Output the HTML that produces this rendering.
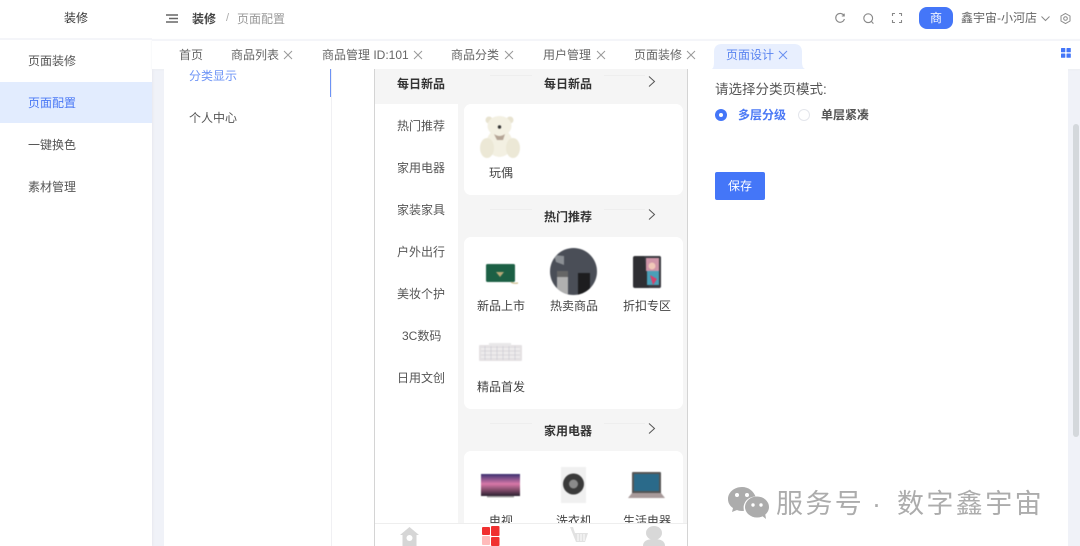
<!DOCTYPE html>
<html lang="zh"><head><meta charset="utf-8">
<style>
*{box-sizing:border-box;margin:0;padding:0}
html{width:1080px;height:546px;overflow:hidden;background:#f0f2f8}
body{position:relative;width:1080px;height:546px;overflow:hidden;background:#f0f2f8;font-family:"Liberation Sans","Noto Sans CJK SC",sans-serif;font-size:12px;color:#555;filter:blur(.3px)}
.a{position:absolute}
.t{position:absolute;white-space:nowrap;line-height:16px}
svg{display:block;overflow:visible}
.cat{left:397px;color:#555;font-size:12px}
.sec{left:544px;font-weight:700;color:#333;font-size:12px}
.lab{color:#444;font-size:12px}
.ln{position:absolute;height:1px;background:#eeeeee}
.chev{position:absolute;left:648px;width:8px;height:11px}
.tab{top:47px;color:#666}
.im{filter:blur(.4px)}
</style></head><body>
<!-- sidebar -->
<div class="a" style="left:0;top:0;width:152px;height:546px;background:#fff;box-shadow:1px 0 2px #e8e8ee"></div>
<div class="a" style="left:0;top:38px;width:152px;height:2px;background:#f4f5f9"></div>
<div class="t" style="left:64px;top:10px;color:#333">装修</div>
<div class="t" style="left:28px;top:53px">页面装修</div>
<div class="a" style="left:0;top:82px;width:152px;height:41px;background:#e2ecfe"></div>
<div class="t" style="left:28px;top:95px;color:#4a78f5">页面配置</div>
<div class="t" style="left:28px;top:137px">一键换色</div>
<div class="t" style="left:28px;top:179px">素材管理</div>
<!-- header -->
<div class="a" style="left:152px;top:0;width:928px;height:39px;background:#fff"></div>
<div class="a" style="left:152px;top:39px;width:928px;height:30px;background:#fff;box-shadow:0 1px 2px #eceef2;border-top:2px solid #f4f5f9"></div>
<svg class="a" style="left:166px;top:14px" width="12" height="10" fill="none" stroke="#666" stroke-width="1.400"><path d="M0 1H12M3 4.500H12M0 8H12"/></svg>
<div class="t" style="left:192px;top:11px;font-weight:700;color:#444">装修</div>
<div class="t" style="left:226px;top:10px;color:#aaa;font-size:11px">/</div>
<div class="t" style="left:237px;top:11px;color:#999">页面配置</div>
<svg class="a" style="left:835px;top:13px" width="10" height="11" fill="none" stroke="#888" stroke-width="1.100"><path d="M8.800 2.400A4.400 4.400 0 1 0 9.400 6M9.200 .6V3H6.800"/></svg>
<svg class="a" style="left:863px;top:13px" width="12" height="12" fill="none" stroke="#888" stroke-width="1.100"><circle cx="5.200" cy="5.200" r="4.400"/><path d="M8.400 8.400L10.400 10.600"/></svg>
<svg class="a" style="left:892px;top:13px" width="10" height="10" fill="none" stroke="#888" stroke-width="1.100"><path d="M.5 3V.5H3M7 .5H9.500V3M9.500 7V9.500H7M3 9.500H.5V7"/></svg>
<div class="a" style="left:919px;top:7px;width:34px;height:22px;background:#4476f8;border-radius:8px;color:#fff;text-align:center;line-height:22px;font-size:12px">商</div>
<div class="t" style="left:961px;top:10px;color:#666;font-size:12px">鑫宇宙-小河店</div>
<svg class="a" style="left:1041px;top:16px" width="9" height="6" fill="none" stroke="#888"><path d="M.5 .5L4.500 4.500L8.500 .5"/></svg>
<svg class="a" style="left:1060px;top:13px" width="11" height="11" fill="none" stroke="#888"><path d="M5.500 .5L10 3V8L5.500 10.500L1 8V3Z"/><circle cx="5.500" cy="5.500" r="1.800"/></svg>
<!-- tabs -->
<div class="t tab" style="left:179px">首页</div>
<div class="t tab" style="left:231px">商品列表</div>
<div class="t tab" style="left:322px">商品管理 ID:101</div>
<div class="t tab" style="left:451px">商品分类</div>
<div class="t tab" style="left:543px">用户管理</div>
<div class="t tab" style="left:634px">页面装修</div>
<svg class="a" style="left:709px;top:44px" width="98" height="25" fill="#e8effe"><path d="M3 25Q5 24 5 18V8Q5 0 13 0H85Q93 0 93 8V18Q93 24 96 25Z"/></svg>
<div class="t tab" style="left:726px;color:#5a84f0">页面设计</div>
<svg class="a" style="left:284px;top:51px" width="8" height="8" stroke="#999"><path d="M0 0L8 8M8 0L0 8"/></svg>
<svg class="a" style="left:414px;top:51px" width="8" height="8" stroke="#999"><path d="M0 0L8 8M8 0L0 8"/></svg>
<svg class="a" style="left:505px;top:51px" width="8" height="8" stroke="#999"><path d="M0 0L8 8M8 0L0 8"/></svg>
<svg class="a" style="left:597px;top:51px" width="8" height="8" stroke="#999"><path d="M0 0L8 8M8 0L0 8"/></svg>
<svg class="a" style="left:687px;top:51px" width="8" height="8" stroke="#999"><path d="M0 0L8 8M8 0L0 8"/></svg>
<svg class="a" style="left:779px;top:51px" width="8" height="8" stroke="#6a90f0"><path d="M0 0L8 8M8 0L0 8"/></svg>
<svg class="a" style="left:1061px;top:48px" width="10" height="10" fill="#4476f8"><rect width="4.300" height="4.300" rx=".6"/><rect x="5.500" width="4.300" height="4.300" rx=".6"/><rect y="5.500" width="4.300" height="4.300" rx=".6"/><rect x="5.500" y="5.500" width="4.300" height="4.300" rx=".6"/></svg>
<!-- main -->
<div class="a" style="left:164px;top:69px;width:904px;height:477px;background:#fff"></div>
<div class="a" style="left:331px;top:69px;width:1px;height:477px;background:#f0f0f3"></div>
<div class="a" style="left:330px;top:69px;width:1px;height:28px;background:#6d93f5"></div>
<div class="t" style="left:189px;top:68px;color:#6f95f6">分类显示</div>
<div class="t" style="left:189px;top:110px;color:#555">个人中心</div>
<div class="a" style="left:1073px;top:124px;width:6px;height:313px;background:#d4d8dc;border-radius:3px"></div>
<!-- phone -->
<div class="a" style="left:374px;top:69px;width:314px;height:477px;background:#f5f5f5;border-left:1px solid #d4d4d4;border-right:1px solid #d4d4d4"></div>
<div class="a" style="left:375px;top:104px;width:83px;height:419px;background:#fff"></div>
<div class="t" style="left:397px;top:76px;font-weight:700;color:#333">每日新品</div>
<div class="t cat" style="top:118px">热门推荐</div>
<div class="t cat" style="top:160px">家用电器</div>
<div class="t cat" style="top:202px">家装家具</div>
<div class="t cat" style="top:244px">户外出行</div>
<div class="t cat" style="top:286px">美妆个护</div>
<div class="t cat" style="top:328px;left:402px">3C数码</div>
<div class="t cat" style="top:370px">日用文创</div>
<div class="t sec" style="top:76px">每日新品</div>
<div class="t sec" style="top:209px">热门推荐</div>
<div class="t sec" style="top:423px">家用电器</div>
<div class="ln" style="left:490px;top:75px;width:42px"></div><div class="ln" style="left:604px;top:75px;width:41px"></div>
<div class="ln" style="left:490px;top:209px;width:42px"></div><div class="ln" style="left:604px;top:209px;width:41px"></div>
<div class="ln" style="left:490px;top:423px;width:42px"></div><div class="ln" style="left:604px;top:423px;width:41px"></div>
<svg class="chev" style="top:76px" fill="none" stroke="#555"><path d="M1 .5L6.500 5.500L1 10.500"/></svg>
<svg class="chev" style="top:209px" fill="none" stroke="#555"><path d="M1 .5L6.500 5.500L1 10.500"/></svg>
<svg class="chev" style="top:423px" fill="none" stroke="#555"><path d="M1 .5L6.500 5.500L1 10.500"/></svg>
<div class="a" style="left:464px;top:104px;width:219px;height:91px;background:#fff;border-radius:7px"></div>
<div class="a" style="left:464px;top:237px;width:219px;height:172px;background:#fff;border-radius:7px"></div>
<div class="a" style="left:464px;top:451px;width:219px;height:95px;background:#fff;border-radius:7px"></div>
<!-- bear -->
<svg class="a im" style="left:480px;top:115px" width="42" height="46"><circle cx="9" cy="5" r="3.500" fill="#e8e3d0"/><circle cx="30" cy="5" r="3.500" fill="#e8e3d0"/><ellipse cx="19.500" cy="11" rx="12" ry="10" fill="#f3f0e2"/><ellipse cx="19.500" cy="28" rx="13" ry="14" fill="#f3f0e2"/><ellipse cx="7" cy="33" rx="7" ry="10" fill="#ece8d6"/><ellipse cx="33" cy="33" rx="7" ry="10" fill="#ece8d6"/><path d="M14 19Q19.500 23 25 19L23 25H17Z" fill="#b5a596"/><circle cx="19.500" cy="12" r="1.700" fill="#333"/></svg>
<div class="t lab" style="left:489px;top:165px">玩偶</div>
<!-- bag -->
<svg class="a im" style="left:485px;top:263px" width="34" height="26"><rect x="1" y="1" width="29" height="18" rx="1.500" fill="#1c6045"/><path d="M11 9L15 14L19 9Z" fill="#b7a878"/><path d="M26 19Q28 21 33 20" fill="none" stroke="#cdbb8a" stroke-width="1.200"/></svg>
<!-- bottles circle -->
<svg class="a im" style="left:550px;top:248px" width="47" height="47"><clipPath id="c"><circle cx="23.500" cy="23.500" r="23.500"/></clipPath><g clip-path="url(#c)"><rect width="47" height="47" fill="#4a4e57"/><rect x="7" y="25" width="11" height="22" fill="#b0b0b0"/><rect x="7" y="23" width="11" height="6" fill="#666"/><rect x="28" y="25" width="12" height="22" fill="#1d1d1f"/><path d="M4 7L14 8L14 17L6 14Z" fill="#8b8f94"/></g></svg>
<!-- phone -->
<svg class="a im" style="left:632px;top:255px" width="30" height="34"><rect x="1" y="1" width="28" height="32" rx="2" fill="#2f2f33"/><path d="M12 1H27Q29 1 29 3V31Q29 33 27 33H17Z" fill="#3a3a40"/><rect x="14" y="3" width="13" height="13" fill="#cf95a8"/><rect x="15" y="16" width="12" height="14" fill="#4aa0b8"/><circle cx="20" cy="11" r="3.500" fill="#f0c8b8"/><path d="M18 20L25 24L21 30Z" fill="#d8406a"/></svg>
<!-- keyboard -->
<svg class="a im" style="left:479px;top:342px" width="44" height="20"><rect width="43" height="16" y="3" rx="1" fill="#e4e1e3"/><rect x="10" y="1" width="22" height="3" fill="#e9e8e9"/><path d="M2 7H41M2 11H41M2 15H41" stroke="#f5f4f5"/><path d="M6 4V18M12 4V18M18 4V18M24 4V18M30 4V18M36 4V18" stroke="#cfcfd5" stroke-width=".8"/></svg>
<div class="t lab" style="left:477px;top:298px">新品上市</div>
<div class="t lab" style="left:550px;top:298px">热卖商品</div>
<div class="t lab" style="left:623px;top:298px">折扣专区</div>
<div class="t lab" style="left:477px;top:379px">精品首发</div>
<!-- tv etc -->
<svg class="a im" style="left:481px;top:473px" width="40" height="26"><defs><linearGradient id="g" x1="0" y1="0" x2="0" y2="1"><stop offset="0" stop-color="#3a3070"/><stop offset=".45" stop-color="#d878a8"/><stop offset=".7" stop-color="#8a5070"/><stop offset="1" stop-color="#2a2030"/></linearGradient></defs><rect width="39" height="22" y="1" fill="url(#g)"/><rect x="6" y="23" width="27" height="1.500" fill="#aaa"/></svg>
<svg class="a im" style="left:560px;top:467px" width="28" height="37"><rect x="1" y="0" width="25" height="36" fill="#f0f0f0"/><circle cx="13.500" cy="17" r="10.500" fill="#3a3a3a"/><circle cx="13.500" cy="17" r="4.500" fill="#8a8a8a"/></svg>
<svg class="a im" style="left:628px;top:471px" width="38" height="28"><rect x="4" y="1" width="29" height="22" rx="1" fill="#555"/><rect x="6" y="3" width="25" height="17" fill="#2a6a8a"/><path d="M0 27L4 22H33L37 27Z" fill="#a89a9a"/></svg>
<div class="t lab" style="left:489px;top:513px">电视</div>
<div class="t lab" style="left:556px;top:513px">洗衣机</div>
<div class="t lab" style="left:623px;top:513px">生活电器</div>
<!-- tabbar -->
<div class="a" style="left:375px;top:523px;width:312px;height:23px;background:#fff;border-top:1px solid #eee"></div>
<svg class="a" style="left:400px;top:527px" width="19" height="19" fill="#d6d6d6"><path d="M9.500 0L19 8H16.500V19H2.500V8H0Z"/><circle cx="9.500" cy="11" r="3" fill="#fff"/></svg>
<svg class="a" style="left:482px;top:526px" width="18" height="20"><rect width="8" height="8" y="1" fill="#f03030" rx="1"/><rect x="9" width="8.500" height="10" fill="#f03030" rx="1"/><rect y="10" width="8" height="9" fill="#fbb" rx="1"/><rect x="9" y="11" width="8.500" height="9" fill="#f03030" rx="1"/></svg>
<svg class="a" style="left:570px;top:527px" width="19" height="19" fill="#e2e2e2"><path d="M0 0H3L5 6H18L15 15H6Z"/><path d="M8 7V14M11 7V14M14 7V14" stroke="#fff"/></svg>
<svg class="a" style="left:643px;top:526px" width="22" height="20" fill="#d8d8d8"><ellipse cx="11" cy="7" rx="8" ry="7"/><path d="M0 20Q0 13 11 13Q22 13 22 20Z"/></svg>
<!-- right form -->
<div class="t" style="left:715px;top:82px;font-size:13.500px;color:#555">请选择分类页模式:</div>
<div class="a" style="left:715px;top:109px;width:12px;height:12px;border-radius:50%;background:#4476f8"></div>
<div class="a" style="left:719px;top:113px;width:4px;height:4px;border-radius:50%;background:#fff"></div>
<div class="t" style="left:738px;top:107px;color:#4a78f5;font-size:12px;font-weight:700">多层分级</div>
<div class="a" style="left:798px;top:109px;width:12px;height:12px;border-radius:50%;border:1px solid #e4e6ec"></div>
<div class="t" style="left:821px;top:107px;color:#555;font-size:12px;font-weight:700">单层紧凑</div>
<div class="a" style="left:715px;top:172px;width:50px;height:28px;background:#4476f8;border-radius:2px;color:#fff;text-align:center;line-height:28px;font-size:12px">保存</div>
<!-- watermark -->
<svg class="a" style="left:728px;top:486px" width="42" height="34" fill="#acacac"><path d="M14 1C6 1 0 6.500 0 13C0 17 2 20 5 22L4 26L9 24C10 24.500 12 25 14 25C15 25 15.500 25 16 24.800C14 17 20 10.500 27.500 10.500C25.500 5 20.500 1 14 1Z"/><ellipse cx="29" cy="21" rx="12" ry="10.500"/><path d="M33 29L38 33L37 27Z"/><circle cx="9" cy="9" r="2" fill="#fff"/><circle cx="19" cy="9" r="2" fill="#fff"/><circle cx="25" cy="19" r="1.700" fill="#fff"/><circle cx="33" cy="19" r="1.700" fill="#fff"/></svg>
<div class="t" style="left:776px;top:489px;font-size:27px;line-height:30px;color:#acacac;letter-spacing:2.400px">服务号</div>
<div class="t" style="left:872px;top:489px;font-size:27px;line-height:30px;color:#acacac">·</div>
<div class="t" style="left:897px;top:489px;font-size:27px;line-height:30px;color:#acacac;letter-spacing:2.400px">数字鑫宇宙</div>
</body></html>
